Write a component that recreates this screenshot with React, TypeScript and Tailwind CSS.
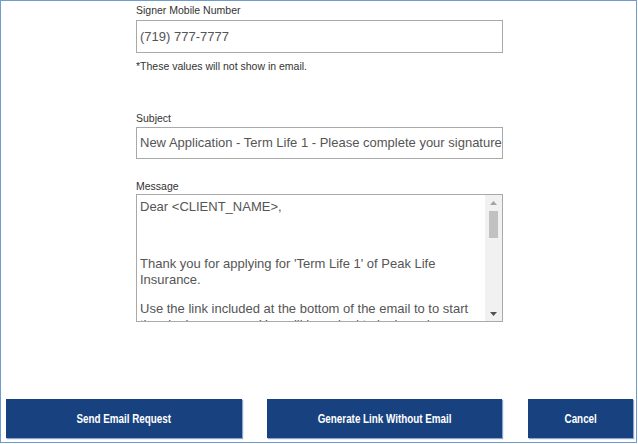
import React from "react";

const font = { fontFamily: '"Liberation Sans", Arial, sans-serif' };

function Label({ children }: { children: React.ReactNode }) {
  return <div className="text-[10.5px] leading-[12px] text-[#333333]">{children}</div>;
}

function Btn({ className, children }: { className: string; children: React.ReactNode }) {
  return (
    <button
      className={
        "h-[39px] bg-[#17427f] shadow-[1px_1px_1px_rgba(90,130,190,0.7)] flex items-center justify-center " +
        className
      }
    >
      <span className="inline-block scale-x-[0.82] whitespace-nowrap">{children}</span>
    </button>
  );
}

export default function App() {
  return (
    <div className="w-[638px] h-[444px] bg-white" style={font}>
      <div className="w-[637px] h-[443px] border border-[#6e9dcd] flex flex-col">
        <div className="ml-[135px] w-[367px] flex flex-col pt-[3px]">
          <Label>Signer Mobile Number</Label>
          <div className="mt-[4px] h-[33px] border border-[#a9a9a9] flex items-center pl-[3px] text-[13px] text-[#555555]">
            (719) 777-7777
          </div>
          <div className="mt-[7px] text-[10.5px] leading-[12px] text-[#333333]">
            *These values will not show in email.
          </div>
          <div className="mt-[40px]">
            <Label>Subject</Label>
          </div>
          <div className="mt-[3px] h-[32px] border border-[#a9a9a9] flex items-center pl-[3px] text-[13px] text-[#555555] whitespace-nowrap overflow-hidden">
            New Application - Term Life 1 - Please complete your signature
          </div>
          <div className="mt-[21px]">
            <Label>Message</Label>
          </div>
          <div className="mt-[2px] h-[128px] border border-[#a9a9a9] flex overflow-hidden">
            <div className="flex-1 overflow-hidden pl-[3px] pt-[4px] text-[13px] leading-[16px] text-[#555555]">
              <div>Dear &lt;CLIENT_NAME&gt;,</div>
              <div className="mt-[41px]">
                Thank you for applying for 'Term Life 1' of Peak Life
                <br />
                Insurance.
              </div>
              <div className="mt-[13px]">
                Use the link included at the bottom of the email to to start
                <br />
                the signing process. You will be asked to login and complete
              </div>
            </div>
            <div className="w-[17px] bg-[#f1f1f1] flex flex-col items-center">
              <div className="h-[15px] flex items-center justify-center">
                <svg width="7" height="4" viewBox="0 0 7 4">
                  <path d="M3.5 0 L7 4 L0 4 Z" fill="#a3a3a3" />
                </svg>
              </div>
              <div className="mt-[1px] w-[9px] h-[27px] bg-[#c1c1c1]" />
              <div className="flex-1" />
              <div className="h-[15px] flex items-center justify-center">
                <svg width="7" height="4" viewBox="0 0 7 4">
                  <path d="M0 0 L7 0 L3.5 4 Z" fill="#505050" />
                </svg>
              </div>
            </div>
          </div>
        </div>
        <div className="flex-1" />
        <div className="flex pl-[5px] pb-[4px] text-white text-[12px] font-bold">
          <Btn className="w-[236px]">Send Email Request</Btn>
          <Btn className="ml-[25px] w-[235px]">Generate Link Without Email</Btn>
          <Btn className="ml-[26px] w-[105px]">Cancel</Btn>
        </div>
      </div>
    </div>
  );
}
